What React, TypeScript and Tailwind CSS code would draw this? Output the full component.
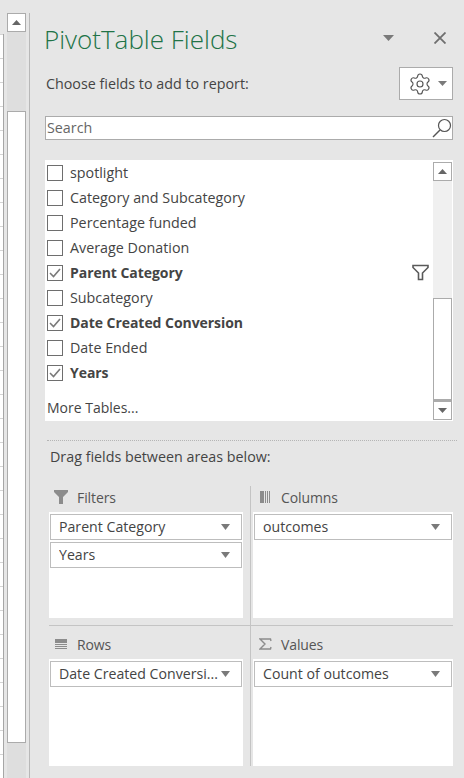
import { Settings } from 'lucide-react';

const font = { fontFamily: '"Open Sans", "Noto Sans", sans-serif' };

function Tri({ w = 11, h = 6, color = '#7a7a7a', up = false }: { w?: number; h?: number; color?: string; up?: boolean }) {
  return (
    <svg width={w} height={h} viewBox={`0 0 ${w} ${h}`} className="shrink-0 block">
      <polygon points={up ? `0,${h} ${w},${h} ${w / 2},0` : `0,0 ${w},0 ${w / 2},${h}`} fill={color} />
    </svg>
  );
}

function FieldRow({ label, checked = false, filter = false }: { label: string; checked?: boolean; filter?: boolean }) {
  return (
    <div className="h-[25px] flex items-center pl-[2px] pr-[3px]">
      <div className="w-4 h-4 border border-[#6e6e6e] bg-white shrink-0 flex items-center justify-center">
        {checked && (
          <svg width="12" height="10" viewBox="0 0 12 10">
            <path d="M1 5 L4.5 8.5 L11 1" fill="none" stroke="#7a7a7a" strokeWidth="1.6" />
          </svg>
        )}
      </div>
      <span className={`ml-[7px] text-[#444] whitespace-nowrap ${checked ? 'font-bold text-[14px] tracking-[-0.05px]' : 'text-[14.3px]'}`}>{label}</span>
      {filter && (
        <svg width="17" height="17" viewBox="0 0 17 17" className="ml-auto mr-[1px]">
          <path d="M1 1.5 H16 V3.5 L10.5 9 V15.5 H6.5 V9 L1 3.5 Z" fill="none" stroke="#5a5a5a" strokeWidth="1.6" />
        </svg>
      )}
    </div>
  );
}

function ScrollButton({ up = false }: { up?: boolean }) {
  return (
    <div className="w-[19px] h-[19px] bg-white border border-[#ababab] flex items-center justify-center shrink-0">
      <Tri w={9} h={5} color="#666" up={up} />
    </div>
  );
}

function AreaItem({ label }: { label: string }) {
  return (
    <div className="h-[26px] bg-white border border-[#bdbdbd] flex items-center pl-2 pr-[11px] mb-[2px]">
      <span className="text-[14.15px] text-[#444] whitespace-nowrap overflow-hidden flex-1">{label}</span>
      <Tri w={9} h={6} />
    </div>
  );
}

function Area({ icon, title, items, h }: { icon: React.ReactNode; title: string; items: string[]; h: string }) {
  return (
    <div>
      <div className="h-[26px] pb-[4px] flex items-center text-[14px] tracking-[-0.1px] text-[#555]">
        <div className="w-[28px] pl-[4px] flex items-center">{icon}</div>
        <span>{title}</span>
      </div>
      <div className={`bg-white p-[1px] pt-[2px] ${h}`}>
        {items.map((i) => (
          <AreaItem key={i} label={i} />
        ))}
      </div>
    </div>
  );
}

export default function App() {
  const rows = Array.from({ length: 31 });
  return (
    <div className="w-[464px] h-[778px] bg-[#e6e6e6] flex overflow-hidden" style={font}>
      {/* sheet edge and vertical scrollbar */}
      <div className="w-[30px] h-full flex shrink-0">
        <div className="w-[4px] pt-[34px] shrink-0">
          <div className="h-full bg-white border-r border-[#a6a6a6] overflow-hidden">
            {rows.map((_, i) => (
              <div key={i} className="h-6 border-t border-[#d4d4d4]" />
            ))}
          </div>
        </div>
        <div className="w-[19px] ml-[3px] mt-[13px] bg-[#dedede] flex flex-col shrink-0">
          <ScrollButton up />
          <div className="h-[79px] shrink-0" />
          <div className="h-[632px] bg-white border border-[#ababab] shrink-0" />
        </div>
        <div className="w-[1px] ml-[3px] mt-[13px] bg-[#b8b8b8] shrink-0" />
      </div>

      {/* task pane */}
      <div className="flex-1 pl-[15px] pr-[12px]">
        <div className="h-[67px] pt-[23px] flex items-start">
          <span className="text-[26px] leading-[32px] font-light text-[#217346] whitespace-nowrap -ml-[1px]">PivotTable Fields</span>
          <div className="ml-auto mt-[12px]">
            <Tri w={11} h={6} />
          </div>
          <svg width="12" height="12" viewBox="0 0 12 12" className="ml-[40px] mr-[7px] mt-[9px]">
            <path d="M0.5 0.5 L11.5 11.5 M11.5 0.5 L0.5 11.5" stroke="#6e6e6e" strokeWidth="1.8" />
          </svg>
        </div>

        <div className="h-[33px] flex items-center justify-between">
          <span className="text-[14.3px] text-[#444] ml-[1px]">Choose fields to add to report:</span>
          <div className="w-[54px] h-[33px] bg-white border border-[#ababab] flex items-center pl-[8px]">
            <Settings size={24} strokeWidth={1.15} color="#555" />
            <div className="ml-[6px]">
              <Tri w={9} h={5} />
            </div>
          </div>
        </div>

        <div className="mt-[16px] h-[24px] bg-white border border-[#ababab] flex items-center pl-[1px]">
          <span className="text-[14.3px] text-[#666] pb-[1px]">Search</span>
          <svg width="20" height="20" viewBox="0 0 20 20" className="ml-auto">
            <circle cx="12.5" cy="7.5" r="6" fill="none" stroke="#555" strokeWidth="1.2" />
            <path d="M8 12 L1 19" stroke="#555" strokeWidth="1.4" />
          </svg>
        </div>

        <div className="mt-[20px] h-[261px] bg-white flex">
          <div className="flex-1 min-w-0">
            <FieldRow label="spotlight" />
            <FieldRow label="Category and Subcategory" />
            <FieldRow label="Percentage funded" />
            <FieldRow label="Average Donation" />
            <FieldRow label="Parent Category" checked filter />
            <FieldRow label="Subcategory" />
            <FieldRow label="Date Created Conversion" checked />
            <FieldRow label="Date Ended" />
            <FieldRow label="Years" checked />
            <div className="h-[45px] flex items-center pl-[2px] text-[14px] text-[#444]">More Tables...</div>
          </div>
          <div className="w-[19px] mr-[1px] mt-[2px] mb-[2px] bg-[#f0f0f0] flex flex-col">
            <ScrollButton up />
            <div className="h-[117px] shrink-0" />
            <div className="h-[103px] bg-white border border-[#ababab] border-b-2 shrink-0" />
            <ScrollButton />
          </div>
        </div>

        <div className="mt-[19px] ml-[2px] -mr-[4px] border-t border-dotted border-[#b5b5b5]" />

        <div className="h-[30px] mt-[1px] flex items-center pl-[5px] text-[14.3px] text-[#444]">Drag fields between areas below:</div>

        <div className="mt-[14px] ml-[4px] w-[404px] grid grid-cols-[201px_1px_202px]">
          <div className="pr-[7px] pb-[7px] border-b border-[#c4c4c4]">
            <Area
              title="Filters"
              h="h-[106px]"
              items={['Parent Category', 'Years']}
              icon={
                <svg width="14" height="14" viewBox="0 0 14 14" className="ml-[1px]">
                  <path d="M0 0 H14 V2 L9 7 V14 H5 V7 L0 2 Z" fill="#8c8c8c" />
                </svg>
              }
            />
          </div>
          <div className="bg-[#c4c4c4]" />
          <div className="pl-[2px] pb-[7px] border-b border-[#c4c4c4]">
            <Area
              title="Columns"
              h="h-[106px]"
              items={['outcomes']}
              icon={
                <svg width="11" height="12" viewBox="0 0 11 12" className="ml-[3px]">
                  <rect x="0" y="0" width="4" height="12" fill="#8c8c8c" />
                  <rect x="5" y="0" width="1" height="12" fill="#8c8c8c" />
                  <rect x="7" y="0" width="1" height="12" fill="#8c8c8c" />
                  <rect x="9" y="0" width="1" height="12" fill="#8c8c8c" />
                </svg>
              }
            />
          </div>
          <div className="pr-[7px] pt-[7px]">
            <Area
              title="Rows"
              h="h-[107px]"
              items={['Date Created Conversi...']}
              icon={
                <svg width="13" height="10" viewBox="0 0 13 10" className="ml-[2px]">
                  <rect x="0" y="0" width="12" height="4" fill="#8c8c8c" />
                  <rect x="0" y="5" width="12" height="1" fill="#8c8c8c" />
                  <rect x="0" y="7" width="12" height="1" fill="#8c8c8c" />
                  <rect x="0" y="9" width="12" height="1" fill="#8c8c8c" />
                </svg>
              }
            />
          </div>
          <div className="bg-[#c4c4c4]" />
          <div className="pl-[2px] pt-[7px]">
            <Area
              title="Values"
              h="h-[107px]"
              items={['Count of outcomes']}
              icon={
                <svg width="13" height="12" viewBox="0 0 13 12" className="ml-[2px]">
                  <path d="M12 3 L11.5 1 H1 L6 6 L1 11 H11.5 L12 9" fill="none" stroke="#8c8c8c" strokeWidth="1.4" />
                </svg>
              }
            />
          </div>
        </div>
      </div>
    </div>
  );
}
